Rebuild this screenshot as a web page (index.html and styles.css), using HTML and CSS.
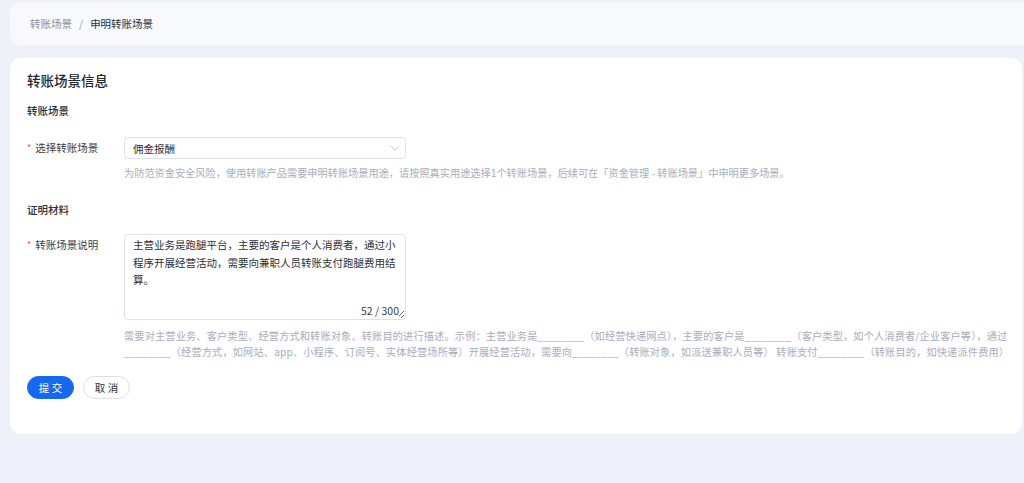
FILE: index.html
```html
<!DOCTYPE html>
<html lang="zh-CN">
<head>
    <meta charset="UTF-8">
    <meta name="viewport" content="width=device-width, initial-scale=1.0">
    <title>申明转账场景</title>
    <link rel="stylesheet" href="styles.css">
</head>
<body>

    <div class="page">
        <div class="crumbs">
            <span class="crumb-link">转账场景</span>
            <span class="crumb-sep">/</span>
            <span class="crumb-current">申明转账场景</span>
        </div>

        <div class="card">
            <div class="card-title">转账场景信息</div>

            <div class="section-title">转账场景</div>
            <div class="form-item">
                <div class="label"><span class="required">*</span>选择转账场景</div>
                <div class="control">
                    <div class="select">
                        <span>佣金报酬</span>
                        <svg class="arrow" width="10" height="6" viewBox="0 0 10 6">
                            <path d="M1 1l4 4 4-4" fill="none" stroke="#c3c6cf" stroke-width="1"/>
                        </svg>
                    </div>
                    <div class="help">为防范资金安全风险，使用转账产品需要申明转账场景用途，请按照真实用途选择1个转账场景，后续可在「资金管理 - 转账场景」中申明更多场景。</div>
                </div>
            </div>

            <div class="section-title proof">证明材料</div>
            <div class="form-item textarea-item">
                <div class="label"><span class="required">*</span>转账场景说明</div>
                <div class="control">
                    <div class="textarea-wrap">
                        <textarea class="textarea" readonly>主营业务是跑腿平台，主要的客户是个人消费者，通过小程序开展经营活动，需要向兼职人员转账支付跑腿费用结算。</textarea>
                        <span class="counter">52 / 300</span>
                    </div>
                    <div class="help help-long">需要对主营业务、客户类型、经营方式和转账对象、转账目的进行描述。示例：主营业务是________（如经营快递网点），主要的客户是________（客户类型，如个人消费者/企业客户等），通过<br>________（经营方式，如网站、app、小程序、订阅号、实体经营场所等）开展经营活动，需要向________（转账对象，如派送兼职人员等） 转账支付________（转账目的，如快递派件费用）</div>
                </div>
            </div>

            <div class="actions">
                <button class="btn btn-primary">提 交</button>
                <button class="btn">取 消</button>
            </div>
        </div>
    </div>

</body>
</html>
```

FILE: styles.css
```css
body {
    margin: 0;
    background: linear-gradient(180deg, #eef1f8 0%, #edf0f8 100%);
    font-family: "Noto Sans CJK SC", "Noto Sans", sans-serif;
    color: #2b2f38;
    height: 483px;
    overflow: hidden;
}

.page {
    padding: 2px 0 0 10px;
}

.crumbs {
    height: 43px;
    display: flex;
    align-items: center;
    padding-left: 20px;
    background-color: #f8f9fd;
    border-radius: 11px 0 0 11px;
    font-size: 10.5px;
}

.crumb-link {
    color: #8b909b;
}

.crumb-sep {
    color: #9a9ea8;
    margin: 0 7px;
}

.crumb-current {
    color: #2b2f38;
}

.card {
    margin: 13px 2px 0 0;
    background-color: #fff;
    border-radius: 11px;
    padding: 12px 17px 35px;
}

.card-title {
    font-size: 13.5px;
    font-weight: 500;
    line-height: 20px;
    color: #23262d;
}

.section-title {
    margin-top: 13px;
    font-size: 10.5px;
    font-weight: 500;
    line-height: 16px;
    color: #2b2f38;
}

.section-title.proof {
    margin-top: 21px;
}

.form-item {
    display: flex;
    margin-top: 18px;
}

.textarea-item {
    margin-top: 16px;
}

.label {
    width: 97px;
    flex-shrink: 0;
    font-size: 10.5px;
    line-height: 22px;
    color: #3a3e47;
}

.textarea-item .label {
    line-height: 17.5px;
    padding-top: 2px;
}

.required {
    color: #f0506e;
    font-size: 9px;
    margin-right: 4px;
    position: relative;
    top: -1px;
}

.control {
    flex: 1;
}

.select {
    width: 282px;
    height: 22px;
    box-sizing: border-box;
    border: 1px solid #dfe2e8;
    border-radius: 4px;
    display: flex;
    align-items: center;
    justify-content: space-between;
    padding: 0 5px 0 8px;
    font-size: 10.5px;
    color: #2b2f38;
}

.help {
    margin-top: 6px;
    font-size: 10.2px;
    line-height: 16px;
    color: #a9adbb;
    white-space: nowrap;
}

.help-long {
    margin-top: 8px;
    letter-spacing: 0.15px;
}

.textarea-wrap {
    position: relative;
    width: 282px;
    height: 86px;
}

.textarea {
    width: 282px;
    height: 86px;
    box-sizing: border-box;
    border: 1px solid #dfe2e8;
    border-radius: 4px;
    padding: 1px 8px 0;
    font-family: "Noto Sans CJK SC", "Noto Sans", sans-serif;
    font-size: 10.5px;
    line-height: 17.5px;
    color: #2b2f38;
    resize: both;
    outline: none;
    display: block;
}

.counter {
    position: absolute;
    right: 7px;
    bottom: 2px;
    font-size: 10.5px;
    line-height: 14px;
    color: #3a3e47;
    background: #fff;
}

.actions {
    display: flex;
    gap: 9px;
    margin-top: 16px;
}

.btn {
    width: 47px;
    height: 23px;
    border-radius: 12px;
    border: 1px solid #dcdfe6;
    background-color: #fff;
    color: #2b2f38;
    font-family: "Noto Sans CJK SC", "Noto Sans", sans-serif;
    font-size: 10.5px;
    padding: 0;
    cursor: pointer;
}

.btn-primary {
    background-color: #1768f0;
    border-color: #1768f0;
    color: #fff;
}
```
